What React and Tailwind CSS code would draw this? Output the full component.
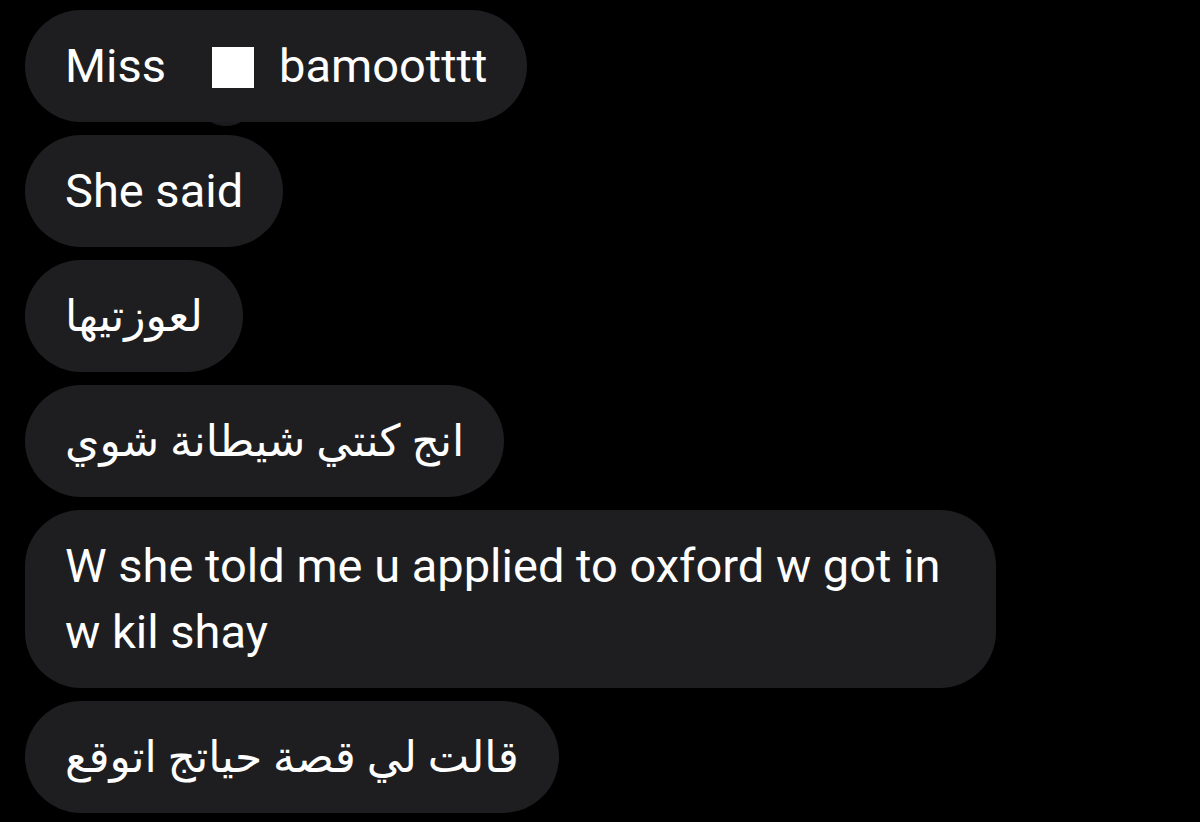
const messages = [
  { id: 1, text: "She said" },
  { id: 2, text: "لعوزتيها", rtl: true },
  { id: 3, text: "انج كنتي شيطانة شوي", rtl: true },
];

function Bubble({ children, className = "", rtl }) {
  return (
    <div
      className={`bg-[#1e1e20] rounded-[56px] px-[40px] py-[23px] text-white leading-[66px] ${rtl ? "text-[44px]" : "text-[47px]"} ${className}`}
    >
      <span dir={rtl ? "rtl" : "ltr"} className="block">
        {children}
      </span>
    </div>
  );
}

export default function App() {
  return (
    <div
      className="min-h-[822px] w-[1200px] bg-black pt-[10px] pl-[25px] flex flex-col items-start gap-[13px] overflow-hidden"
      style={{ fontFamily: 'Roboto, "DejaVu Sans", sans-serif' }}
    >
      <div className="relative">
        {/* reaction stub peeking under the first bubble */}
        <div className="absolute left-[180px] top-[88px] w-[42px] h-[28px] rounded-[50%] bg-[#1a1a1c]" />
        <div className="relative">
          <Bubble>
            Miss
            <span className="inline-block w-[42px] h-[41px] bg-white align-[-6px] ml-[46px] mr-[25px]" />
            bamootttt
          </Bubble>
        </div>
      </div>
      {messages.map((m) => (
        <Bubble key={m.id} rtl={m.rtl}>
          {m.text}
        </Bubble>
      ))}
      <Bubble className="w-[971px]">
        W she told me u applied to oxford w got in
        <br />w kil shay
      </Bubble>
      <Bubble rtl>قالت لي قصة حياتج اتوقع</Bubble>
    </div>
  );
}
